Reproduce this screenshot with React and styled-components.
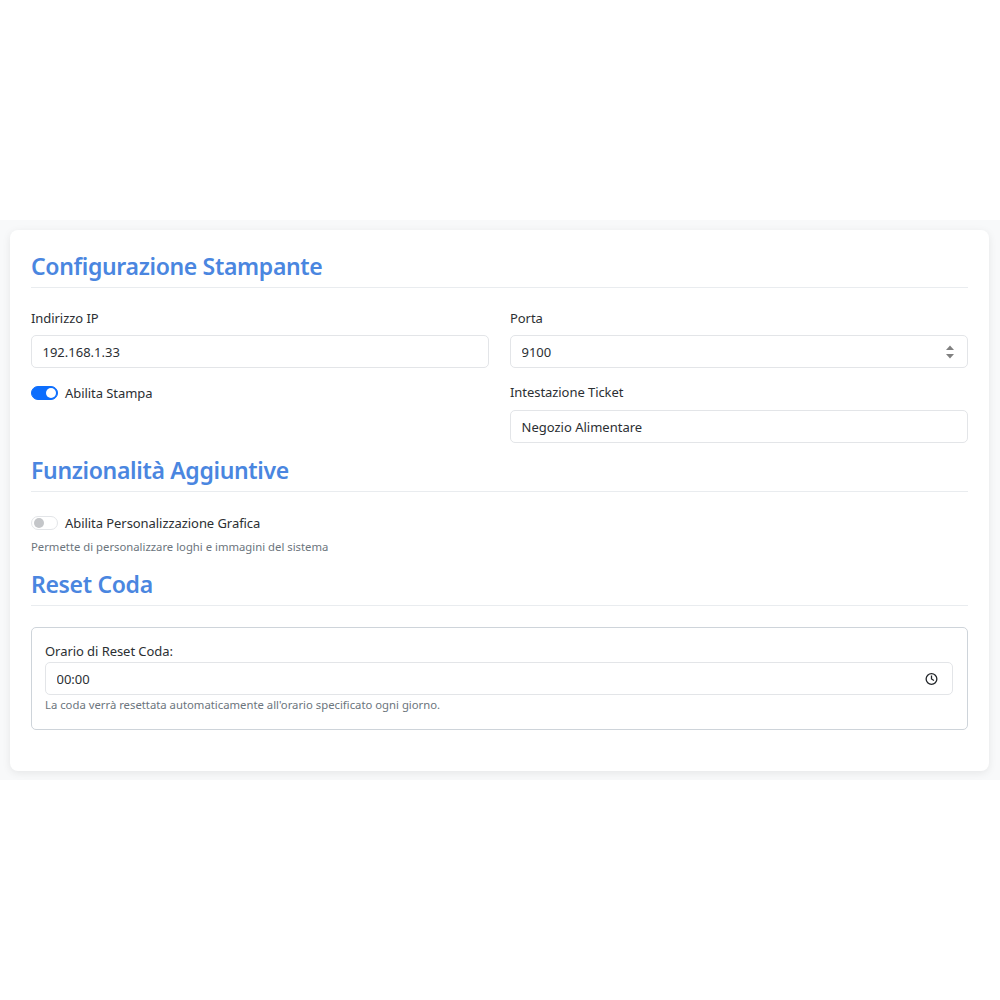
import React from 'react';
import styled, { createGlobalStyle } from 'styled-components';

const GlobalStyle = createGlobalStyle`
  html, body {
    margin: 0;
    padding: 0;
    background: #ffffff;
  }
  body {
    font-family: 'Noto Sans', 'Open Sans', Arial, sans-serif;
    color: #2b2f33;
  }
`;

const Band = styled.div`
  margin-top: 220px;
  height: 560px;
  box-sizing: border-box;
  padding: 10px 11px 9px 10px;
  background: #f8f9fa;
`;

const Card = styled.main`
  height: 541px;
  box-sizing: border-box;
  padding: 20px 21px;
  background: #ffffff;
  border-radius: 8px;
  box-shadow: 0 2px 8px rgba(0, 0, 0, 0.08);
`;

const SectionTitle = styled.h2`
  margin: ${(p) => p.$top || 0}px 0 ${(p) => p.$bottom || 20}px;
  height: 36px;
  box-sizing: content-box;
  padding-bottom: 1px;
  border-bottom: 1px solid #e9ecef;
  font-size: 23px;
  line-height: 32px;
  font-weight: 600;
  letter-spacing: -0.33px;
  color: #4a86e0;
`;

const Grid = styled.div`
  display: grid;
  grid-template-columns: 458px 458px;
  column-gap: 21px;
  margin-top: ${(p) => p.$top || 0}px;
`;

const Field = styled.div`
  display: flex;
  flex-direction: column;
`;

const Label = styled.label`
  display: block;
  height: 21px;
  margin-bottom: ${(p) => p.$gap ?? 6}px;
  font-size: 13px;
  line-height: 21px;
  letter-spacing: -0.06px;
`;

const InputWrap = styled.div`
  position: relative;
  height: 33px;
`;

const Input = styled.input`
  display: block;
  width: 100%;
  height: 100%;
  box-sizing: border-box;
  padding: 0 10.5px;
  border: 1px solid #e3e5e8;
  border-radius: 5px;
  background: #ffffff;
  font-family: inherit;
  font-size: 13px;
  color: #2b2f33;
  outline: none;
`;

const InputIcon = styled.svg`
  position: absolute;
  top: 50%;
  right: ${(p) => p.$right}px;
  transform: translateY(-50%);
`;

const SwitchRow = styled.div`
  display: flex;
  align-items: center;
  gap: 7px;
  height: 21px;
  font-size: 13px;
  letter-spacing: -0.06px;
`;

const Track = styled.span`
  display: flex;
  align-items: center;
  justify-content: ${(p) => (p.$on ? 'flex-end' : 'flex-start')};
  width: 27px;
  height: 14px;
  box-sizing: border-box;
  padding: 0 1.5px;
  border-radius: 7px;
  border: 1px solid ${(p) => (p.$on ? '#0d6efd' : '#e3e5e8')};
  background: ${(p) => (p.$on ? '#0d6efd' : '#ffffff')};
`;

const Knob = styled.span`
  width: 10px;
  height: 10px;
  border-radius: 50%;
  background: ${(p) => (p.$on ? '#ffffff' : '#c4c6c9')};
`;

const Hint = styled.div`
  font-size: 11.3px;
  line-height: 16px;
  color: #6c757d;
  margin-top: ${(p) => p.$top || 0}px;
`;

const ResetBox = styled.section`
  height: 103px;
  box-sizing: border-box;
  padding: 13px 14px 0 13px;
  border: 1px solid #ced4da;
  border-radius: 5px;
`;

const Switch = ({ on }) => (
  <Track $on={on}>
    <Knob $on={on} />
  </Track>
);

const App = () => (
  <>
    <GlobalStyle />
    <Band>
      <Card>
        <SectionTitle $bottom={20}>Configurazione Stampante</SectionTitle>
        <Grid>
          <Field>
            <Label>Indirizzo IP</Label>
            <InputWrap>
              <Input readOnly value="192.168.1.33" />
            </InputWrap>
          </Field>
          <Field>
            <Label>Porta</Label>
            <InputWrap>
              <Input readOnly value="9100" />
              <InputIcon $right={13} width="10" height="16" viewBox="0 0 10 16">
                <path d="M5 1.5 9 6H1z" fill="#808080" />
                <path d="M5 14.5 1 10h8z" fill="#808080" />
              </InputIcon>
            </InputWrap>
          </Field>
        </Grid>
        <Grid $top={14}>
          <SwitchRow>
            <Switch on />
            Abilita Stampa
          </SwitchRow>
          <Field>
            <Label $gap={7}>Intestazione Ticket</Label>
            <InputWrap>
              <Input readOnly value="Negozio Alimentare" />
            </InputWrap>
          </Field>
        </Grid>
        <SectionTitle $top={11}>Funzionalità Aggiuntive</SectionTitle>
        <SwitchRow>
          <Switch />
          Abilita Personalizzazione Grafica
        </SwitchRow>
        <Hint $top={6}>Permette di personalizzare loghi e immagini del sistema</Hint>
        <SectionTitle $top={13} $bottom={21}>Reset Coda</SectionTitle>
        <ResetBox>
          <Label $gap={0}>Orario di Reset Coda:</Label>
          <InputWrap>
            <Input readOnly value="00:00" />
            <InputIcon $right={15} width="13" height="13" viewBox="0 0 16 16">
              <circle cx="8" cy="8" r="6.6" fill="none" stroke="#212529" strokeWidth="1.6" />
              <path d="M8 3.8V8l3 1.8" fill="none" stroke="#212529" strokeWidth="1.6" />
            </InputIcon>
          </InputWrap>
          <Hint $top={2}>La coda verrà resettata automaticamente all'orario specificato ogni giorno.</Hint>
        </ResetBox>
      </Card>
    </Band>
  </>
);

export default App;
